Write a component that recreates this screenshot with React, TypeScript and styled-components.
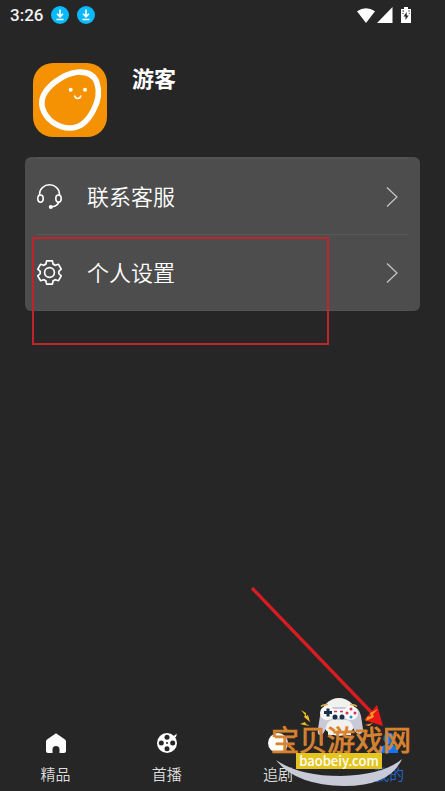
import React from "react";
import styled, { createGlobalStyle } from "styled-components";

const Global = createGlobalStyle`
  * { box-sizing: border-box; }
  body { margin: 0; background: #262626; }
`;

const Page = styled.div`
  position: relative;
  display: flex;
  flex-direction: column;
  min-height: 100vh;
  overflow: hidden;
  background: #262626;
  color: #fff;
  font-family: "Noto Sans CJK SC", sans-serif;
`;

const StatusBar = styled.header`
  display: flex;
  align-items: center;
  justify-content: space-between;
  height: 30px;
  padding: 0 34px 0 10px;
`;

const StatusGroup = styled.div<{ $gap: number }>`
  display: flex;
  align-items: center;
  gap: ${(p) => p.$gap}px;
`;

const Clock = styled.time`
  font: 500 17px/20px Roboto, sans-serif;
  color: #f2f2f2;
`;

const Icon = styled.svg`
  display: block;
  flex: none;
`;

const Profile = styled.section`
  display: flex;
  gap: 25px;
  padding: 33px 33px 20px;
`;

const Name = styled.h1`
  margin: 0;
  font-size: 22px;
  line-height: 28px;
  font-weight: 700;
`;

const Card = styled.ul`
  margin: 0 25px;
  padding: 0 12px;
  list-style: none;
  border-radius: 6px;
  background: #4d4d4d;
`;

const CardItem = styled.li`
  border-top: 1px solid #585858;
  &:first-child { border-top: 2px solid #555; }
  &:last-child { border-bottom: 1px solid #555; }
`;

const RowButton = styled.button`
  display: flex;
  align-items: center;
  width: 100%;
  height: 75px;
  padding: 0 10px 0 0;
  border: 0;
  background: none;
  color: #fff;
  font: 350 22px/32px "Noto Sans CJK SC", sans-serif;
  text-align: left;
  cursor: pointer;
`;

const RowLabel = styled.span`
  flex: 1;
  padding: 0 0 4px 25px;
`;

const TabBar = styled.nav`
  display: flex;
  margin-top: auto;
  padding-bottom: 5px;
`;

const Tab = styled.button<{ $active?: boolean }>`
  display: flex;
  flex: 1;
  flex-direction: column;
  align-items: center;
  gap: 8px;
  padding: 0;
  border: 0;
  background: none;
  color: ${(p) => (p.$active ? "#0d78f5" : "#fff")};
  cursor: pointer;
`;

const TabLabel = styled.span<{ $active?: boolean }>`
  color: ${(p) => (p.$active ? "#2467cf" : "#ddd")};
  font: 350 15px/24px "Noto Sans CJK SC", sans-serif;
`;

const Highlight = styled.div`
  position: absolute;
  left: 32px;
  top: 237px;
  width: 297px;
  height: 108px;
  border: 2px solid #bf242c;
  pointer-events: none;
`;

const Pointer = styled.svg`
  position: absolute;
  right: 59px;
  bottom: 63px;
  pointer-events: none;
`;

const Watermark = styled.div`
  position: absolute;
  right: 32px;
  bottom: 4px;
  width: 142px;
  height: 90px;
  pointer-events: none;
`;

const WatermarkArt = styled.svg`
  position: absolute;
  inset: 0;
`;

const WatermarkTitle = styled.div`
  position: absolute;
  left: 0;
  top: 28px;
  white-space: nowrap;
  font: 350 28px/28px "Noto Sans CJK SC", sans-serif;
  color: #b58a5c;
  -webkit-text-stroke: 1px #e2811f;
`;

const WatermarkSite = styled.div`
  position: absolute;
  left: 25px;
  top: 56px;
  width: 86px;
  background: #e4c51f;
  color: #fff;
  text-align: center;
  font: 500 13px/16px "Noto Sans CJK SC", sans-serif;
`;

const Download = () => (
  <Icon width="18" height="18" viewBox="0 0 18 18">
    <circle cx="9" cy="9" r="9" fill="#08b9fb" />
    <path d="M9 3.5v7M6 7.8l3 3 3-3M5.500 13.500h7" fill="none" stroke="#fff" strokeWidth="1.6" />
  </Icon>
);

const Wifi = () => (
  <Icon width="18" height="15" viewBox="0 0 18 15">
    <path d="M0 3.3Q9-3 18 3.3L9 15Z" fill="#fff" />
  </Icon>
);

const Signal = () => (
  <Icon width="16" height="16" viewBox="0 0 16 16">
    <path d="M15.500 0v16H0Z" fill="#fff" />
  </Icon>
);

const Battery = () => (
  <Icon width="10" height="16" viewBox="0 0 10 16">
    <path d="M3 0h4v2h3v14H0V2h3Z" fill="#fff" />
    <path d="M5.700 5 2.500 9.400h2V13l3.200-4.600h-2Z" fill="#262626" />
    <path d="M1.500 4h1.500M7.300 4h1.400M1.500 6.500h1M7.800 6.500h.8" stroke="#262626" />
  </Icon>
);

const Avatar = () => (
  <Icon width="74" height="74" viewBox="0 0 74 74" role="img" aria-label="头像">
    <rect width="74" height="74" rx="20" fill="#f49204" />
    <path
      d="M44 9.200C54 8.600 61.500 12 64 20C66.500 28 65.500 38 60.500 47C55 58 48 65 37 65C25 65 13 57 9.500 45C6.500 34 13 26 22 19C30 13 37 9.800 44 9.200Z"
      fill="none"
      stroke="#fff"
      strokeWidth="5.6"
    />
    <circle cx="37.700" cy="26.800" r="2" fill="#fff" />
    <circle cx="52" cy="26.800" r="2" fill="#fff" />
    <path d="M41.500 32.500c1 4 5.500 4 6.500 0" fill="none" stroke="#fff" strokeWidth="1.5" />
  </Icon>
);

const Headset = () => (
  <Icon width="25" height="25" viewBox="0 0 25 25" fill="none" stroke="#fff" strokeWidth="1.6">
    <path d="M2.600 11.500V10a9.900 9.200 0 0 1 19.800 0v1.500M22.200 17.500c-1 3-3.500 4.800-7.200 5.200" />
    <ellipse cx="3.500" cy="14.600" rx="2.700" ry="3.600" />
    <ellipse cx="21.500" cy="14.600" rx="2.700" ry="3.600" />
    <circle cx="13.800" cy="22.900" r="2" fill="#fff" stroke="none" />
  </Icon>
);

const Gear = () => (
  <Icon width="25" height="25" viewBox="0 0 25 25" fill="none" stroke="#fff" strokeWidth="1.7" strokeLinejoin="round">
    <path d="M9.600.9h5.800l.7 3.200q1.200.4 2.200 1.200l3.200-1 2.700 4.800-2.400 2.200v2.400l2.400 2.200-2.700 4.800-3.200-1q-1 .8-2.200 1.200l-.7 3.200H9.600l-.7-3.200q-1.200-.4-2.200-1.200l-3.200 1L.8 15.900l2.400-2.200v-2.400L.8 9.100l2.700-4.800 3.200 1q1-.8 2.200-1.200Z" />
    <circle cx="12.500" cy="12.500" r="4.900" />
  </Icon>
);

const Chevron = () => (
  <Icon width="12" height="20" viewBox="0 0 12 20">
    <path d="m1 .5 10 9.500-10 9.500" fill="none" stroke="#c8c8c8" strokeWidth="1.2" />
  </Icon>
);

const Home = () => (
  <Icon width="22" height="22" viewBox="0 0 22 22">
    <path
      d="M11 1.300 20 7.500Q21 8.300 21 9.500V19q0 2-2 2h-4.500v-3.500a3.500 3.500 0 0 0-7 0V21H3q-2 0-2-2V9.500Q1 8.300 2 7.500Z"
      fill="currentColor"
    />
  </Icon>
);

const Reel = () => (
  <Icon width="22" height="22" viewBox="0 0 22 22">
    <circle cx="11" cy="11" r="10" fill="currentColor" />
    <path d="M15 4.500Q18.500 4.500 20.500 1.500Q21 4.500 18.500 6Z" fill="currentColor" />
    <g fill="#262626">
      <circle cx="11" cy="5.300" r="2.500" />
      <circle cx="5.300" cy="11" r="2.500" />
      <circle cx="16.700" cy="11" r="2.500" />
      <circle cx="11" cy="16.700" r="2.500" />
      <circle cx="11" cy="11" r="1" />
    </g>
  </Icon>
);

const Disc = () => (
  <Icon width="22" height="22" viewBox="0 0 22 22">
    <circle cx="11" cy="11" r="10" fill="currentColor" />
  </Icon>
);

const Person = () => (
  <Icon width="22" height="22" viewBox="0 0 22 22">
    <ellipse cx="11" cy="6.500" rx="5.500" ry="6" fill="currentColor" />
    <path d="M2 21v-2c0-4 3-6 6-6h6c3 0 6 2 6 6v2Z" fill="currentColor" />
  </Icon>
);

const rows = [
  { label: "联系客服", icon: <Headset /> },
  { label: "个人设置", icon: <Gear /> },
];

const tabs = [
  { label: "精品", icon: <Home />, active: false },
  { label: "首播", icon: <Reel />, active: false },
  { label: "追剧", icon: <Disc />, active: false },
  { label: "我的", icon: <Person />, active: true },
];

export default function App() {
  return (
    <Page>
      <Global />
      <StatusBar>
        <StatusGroup $gap={8}>
          <Clock>3:26</Clock>
          <Download />
          <Download />
        </StatusGroup>
        <StatusGroup $gap={2}>
          <Wifi />
          <StatusGroup $gap={8}>
            <Signal />
            <Battery />
          </StatusGroup>
        </StatusGroup>
      </StatusBar>
      <Profile>
        <Avatar />
        <Name>游客</Name>
      </Profile>
      <Card>
        {rows.map((r) => (
          <CardItem key={r.label}>
            <RowButton type="button">
              {r.icon}
              <RowLabel>{r.label}</RowLabel>
              <Chevron />
            </RowButton>
          </CardItem>
        ))}
      </Card>
      <TabBar>
        {tabs.map((t) => (
          <Tab key={t.label} type="button" $active={t.active}>
            {t.icon}
            <TabLabel $active={t.active}>{t.label}</TabLabel>
          </Tab>
        ))}
      </TabBar>
      <Highlight />
      <Pointer width="136" height="142" viewBox="0 0 136 142">
        <path d="M2 2 122 127" stroke="#d71c22" strokeWidth="3.4" />
        <path d="m133 140-19-6 13-15Z" fill="#e81818" />
      </Pointer>
      <Watermark>
        <WatermarkArt width="142" height="90" viewBox="0 0 142 90">
          <path d="M5 63Q28 79 70 79Q112 78 131 62Q119 89 73 89Q24 88 5 63Z" fill="#c9cad8" />
          <ellipse cx="68" cy="20" rx="18" ry="19" fill="#f1f1ee" />
          <path d="M55 10h27q6 0 8 9l2 13q0 5-4 5-4 0-6-7-2-7-7-7H62q-5 0-7 7-2 8-6 8-3 0-2-6l2-13q1-9 6-9Z" fill="#c9cad8" />
          <path d="M57 32q0-7 6-7h11q5 0 6 7v6H57Z" fill="#f1f1ee" />
          <path d="M56 9q5 0 6 3h12q1-3 6-3a7 7 0 0 1 0 14q-4 0-6-2H62q-2 2-6 2a7 7 0 0 1 0-14Z" fill="#f9f9fa" />
          <path d="M57 11.500v8M53 15.500h8" stroke="#193047" strokeWidth="3" />
          <circle cx="64" cy="20" r="2.500" fill="#193047" />
          <circle cx="71" cy="20" r="2.500" fill="#193047" />
          <path d="M63 14.500h3M69 14.500h3" stroke="#d5335f" strokeWidth="1.5" />
          <g fill="#dd304b">
            <circle cx="80" cy="12" r="1.500" />
            <circle cx="84" cy="16" r="1.500" />
            <circle cx="76" cy="16" r="1.500" />
          </g>
          <circle cx="80" cy="20" r="1.500" fill="#258fd0" />
          <path d="M50 9.500q2-2 7-2M86 9.500q-2-2-7-2" fill="none" stroke="#d9b64c" strokeWidth="1.5" />
          <path d="m30 13 5 3v3l2-1 2 7-6-5 1-2ZM29 27l5-2 1 2 4 2-6-1Z" fill="#f2ba25" />
          <path d="m107 12-8 4 1 3-4 1-1 4 8-4-1-3ZM102 26l-8 2 4 1Z" fill="#f99b23" />
        </WatermarkArt>
        <WatermarkTitle>宝贝游戏网</WatermarkTitle>
        <WatermarkSite>baobeiy.com</WatermarkSite>
      </Watermark>
    </Page>
  );
}
